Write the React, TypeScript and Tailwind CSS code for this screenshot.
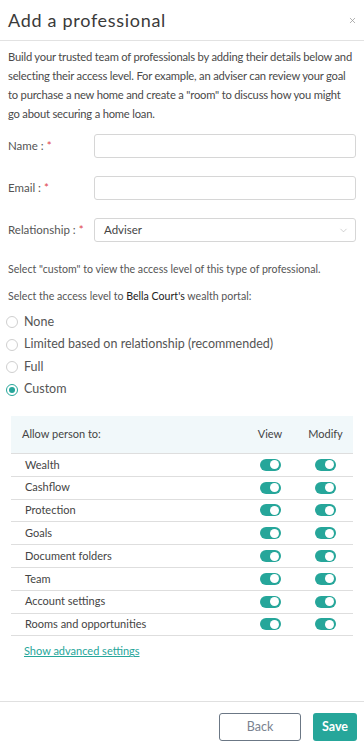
import { ChevronDown, X } from "lucide-react"

const permissions = [
  "Wealth",
  "Cashflow",
  "Protection",
  "Goals",
  "Document folders",
  "Team",
  "Account settings",
  "Rooms and opportunities",
]

const levels = [
  { label: "None", checked: false },
  { label: "Limited based on relationship (recommended)", checked: false },
  { label: "Full", checked: false },
  { label: "Custom", checked: true },
]

function Toggle() {
  return (
    <span className="relative inline-flex h-[12px] w-[21px] items-center rounded-full bg-[#26a69a]">
      <span className="absolute right-[2px] h-[9px] w-[9px] rounded-full bg-white" />
    </span>
  )
}

function Field({ label, children }: { label: string; children: React.ReactNode }) {
  return (
    <div className="flex items-center">
      <label className="w-[86px] text-[11.5px] text-[#555]">
        {label}
        <span className="ml-[3px] text-[#e0434b]">*</span>
      </label>
      {children}
    </div>
  )
}

export default function App() {
  return (
    <div className="flex h-[745px] w-[364px] flex-col bg-white font-['Lato',sans-serif] text-[#555]">
      {/* Header */}
      <div className="flex h-[41px] items-center justify-between border-b border-[#e2e2e2] pl-[8px] pr-[7px]">
        <h1 className="text-[18px] tracking-[0.7px] text-[#3a3a3a]">Add a professional</h1>
        <X className="h-[9px] w-[9px] text-[#999]" strokeWidth={2} />
      </div>

      {/* Body */}
      <div className="flex-1 px-[8px] pt-[6px]">
        <p className="text-[11.2px] leading-[19px] tracking-[-0.2px] text-[#4a4a4a]">
          Build your trusted team of professionals by adding their details below and selecting their access level.
          For example, an adviser can review your goal
          <br />
          to purchase a new home and create a "room" to discuss how you might
          <br />
          go about securing a home loan.
        </p>

        <div className="mt-[11px] flex flex-col gap-[18px]">
          <Field label="Name :">
            <input className="h-[24px] flex-1 rounded-[3px] border border-[#d6d6d6]" />
          </Field>
          <Field label="Email :">
            <input className="h-[24px] flex-1 rounded-[3px] border border-[#d6d6d6]" />
          </Field>
          <Field label="Relationship :">
            <div className="flex h-[24px] flex-1 items-center justify-between rounded-[3px] border border-[#d6d6d6] pl-[9px] pr-[6px] text-[11.5px] text-[#444]">
              Adviser
              <ChevronDown className="h-[11px] w-[11px] text-[#aaa]" strokeWidth={1.2} />
            </div>
          </Field>
        </div>

        <p className="mt-[19px] text-[10.6px] leading-[16.5px] text-[#555]">
          Select "custom" to view the access level of this type of professional.
        </p>
        <p className="mt-[10px] text-[10.6px] leading-[16.5px] text-[#555]">
          Select the access level to <span className="text-[#222]">Bella Court's</span> wealth portal:
        </p>

        <div className="mt-[9px] flex flex-col gap-[4px]">
          {levels.map((l) => (
            <div key={l.label} className="-ml-[2px] flex h-[18.5px] items-center gap-[6px] text-[12.5px] text-[#555]">
              <span
                className={
                  l.checked
                    ? "flex h-[12px] w-[12px] items-center justify-center rounded-full border border-[#26a69a]"
                    : "h-[12px] w-[12px] rounded-full border border-[#cfcfcf]"
                }
              >
                {l.checked && <span className="h-[6px] w-[6px] rounded-full bg-[#26a69a]" />}
              </span>
              {l.label}
            </div>
          ))}
        </div>

        {/* Permissions table */}
        <div className="mx-[3px] mt-[17px]">
          <div className="flex h-[38px] items-center border-b border-[#dedede] bg-[#f1f8fa] pl-[11px] text-[11px] text-[#444]">
            <span className="flex-1">Allow person to:</span>
            <span className="w-[56px] text-center">View</span>
            <span className="w-[55px] text-center">Modify</span>
          </div>
          {permissions.map((p) => (
            <div key={p} className="flex h-[22.8px] items-center border-b border-[#dedede] pl-[14px] text-[11px] text-[#444]">
              <span className="flex-1">{p}</span>
              <span className="flex w-[56px] justify-center">
                <Toggle />
              </span>
              <span className="flex w-[55px] justify-center">
                <Toggle />
              </span>
            </div>
          ))}
        </div>

        <a href="#" className="mt-[7px] ml-[16px] inline-block text-[11px] text-[#26a69a] underline">
          Show advanced settings
        </a>
      </div>

      {/* Footer */}
      <div className="flex h-[44px] items-start justify-end gap-[12px] border-t border-[#e0e0e0] pr-[7px] pt-[11px]">
        <button className="h-[28px] w-[82px] rounded-[3px] border border-[#6b7785] text-[12.5px] text-[#7a8290]">
          Back
        </button>
        <button className="h-[28px] w-[44px] rounded-[3px] bg-[#26a69a] text-[12.5px] font-bold text-white">
          Save
        </button>
      </div>
    </div>
  )
}
